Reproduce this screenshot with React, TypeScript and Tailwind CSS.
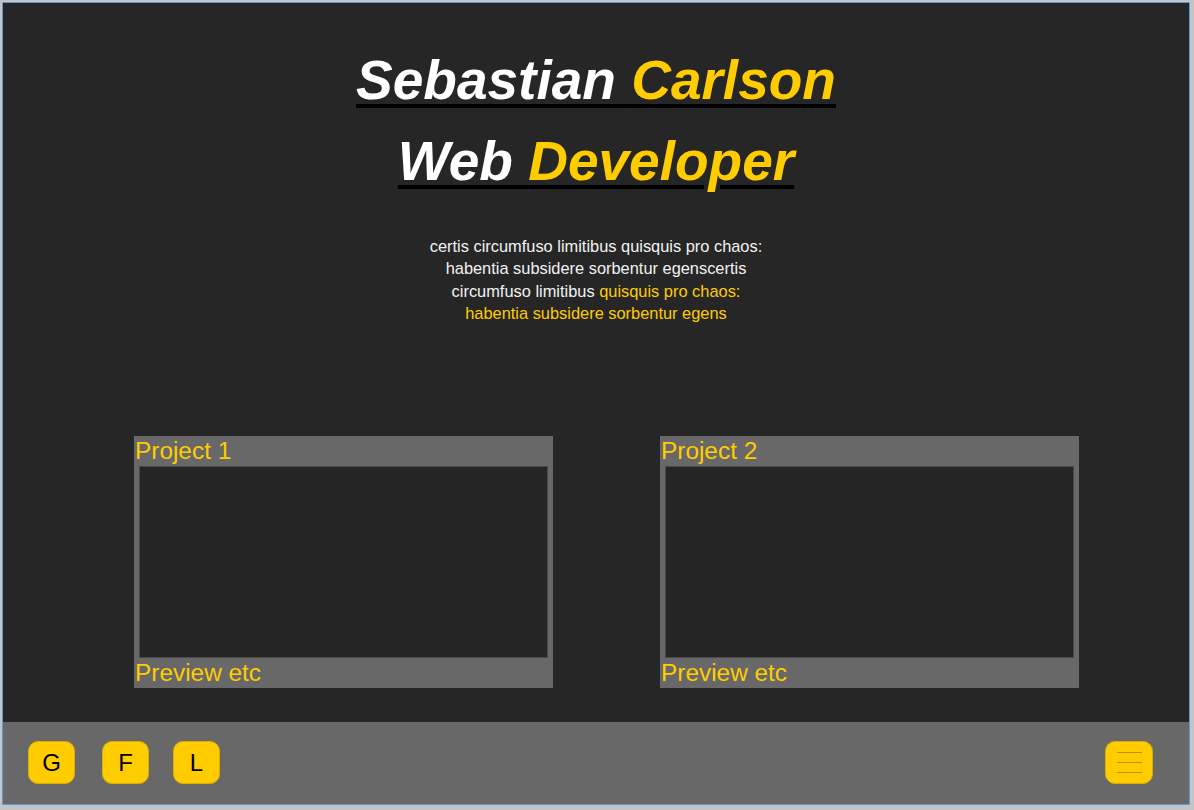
import { useState } from "react";

const FONT = { fontFamily: '"Liberation Sans", Arial, sans-serif' };

const projects = [
  { id: 1, title: "Project 1", caption: "Preview etc" },
  { id: 2, title: "Project 2", caption: "Preview etc" },
];

const socials = [
  { key: "G", ml: "ml-[25px]" },
  { key: "F", ml: "ml-[27px]" },
  { key: "L", ml: "ml-[24px]" },
];

function ProjectCard({ title, caption }: { title: string; caption: string }) {
  return (
    <div className="w-[419px] h-[252px] bg-[#686868] flex flex-col">
      <div className="h-[30px] pl-[1px] text-[24.4px] leading-[30px] text-[#ffcc00]">{title}</div>
      <div className="mx-[5px] flex-1 bg-[#252525] border border-[#4a4a4a]" />
      <div className="h-[30px] pl-[1px] text-[24.4px] leading-[30px] text-[#ffcc00]">{caption}</div>
    </div>
  );
}

export default function App() {
  const [menuOpen, setMenuOpen] = useState(false);

  return (
    <div style={FONT} className="w-[1194px] h-[810px] bg-[#c4c4c4] pl-[2px] pt-[2px] pr-[4px] pb-[5px]">
      <div className="w-full h-full border border-[#5b9bd5] flex flex-col">
        <main className="flex-1 bg-[#262626] flex flex-col items-center">
          <h1 className="mt-[45px] text-[55px] leading-[64px] font-bold italic text-white underline decoration-black decoration-4 underline-offset-[5px]">
            Sebastian <span className="text-[#ffcc00]">Carlson</span>
          </h1>
          <h1 className="mt-[17px] text-[55px] leading-[64px] font-bold italic text-white underline decoration-black decoration-4 underline-offset-[5px]">
            Web <span className="text-[#ffcc00]">Developer</span>
          </h1>

          <p className="mt-[42px] w-[370px] text-center text-[16.4px] leading-[22.4px] text-[#f2f2f2]">
            certis circumfuso limitibus quisquis pro chaos:
            <br />
            habentia subsidere sorbentur egenscertis
            <br />
            circumfuso limitibus <span className="text-[#ffcc00]">quisquis pro chaos:</span>
            <br />
            <span className="text-[#ffcc00]">habentia subsidere sorbentur egens</span>
          </p>

          <div className="mt-[111px] self-stretch flex pl-[131px] gap-[107px]">
            {projects.map((p) => (
              <ProjectCard key={p.id} title={p.title} caption={p.caption} />
            ))}
          </div>
        </main>

        <footer className="h-[82px] bg-[#686868] flex items-center">
          {socials.map((s) => (
            <button
              key={s.key}
              className={`${s.ml} w-[47px] h-[43px] -mt-[1px] rounded-[10px] bg-[#ffcc00] border border-[#d9ae00] text-[24px] text-black flex items-center justify-center`}
            >
              {s.key}
            </button>
          ))}
          <button
            onClick={() => setMenuOpen(!menuOpen)}
            className="ml-auto mr-[36px] w-[48px] h-[43px] -mt-[1px] rounded-[10px] bg-[#ffcc00] border border-[#d9ae00] flex flex-col items-center justify-center gap-[9px]"
          >
            <span className="w-[25px] h-[1px] bg-[#b8920f]" />
            <span className="w-[25px] h-[1px] bg-[#b8920f]" />
            <span className="w-[25px] h-[1px] bg-[#b8920f]" />
          </button>
        </footer>
      </div>
    </div>
  );
}
